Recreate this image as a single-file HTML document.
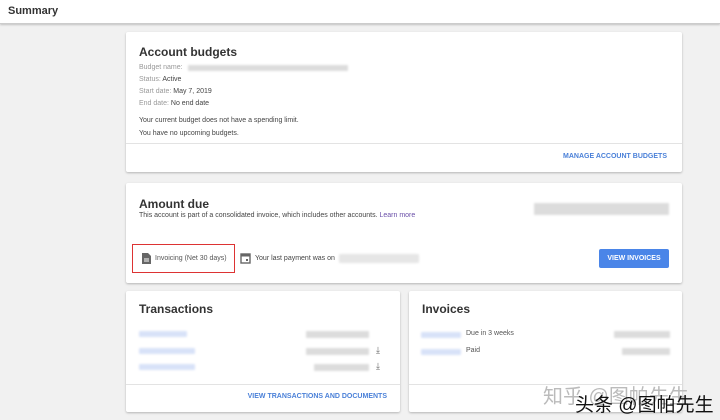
<!DOCTYPE html>
<html><head><style>
body{margin:0;width:720px;height:420px;background:#f1f1f1;font-family:"Liberation Sans",sans-serif;position:relative;overflow:hidden;color:#202124}
.hdr{position:absolute;left:0;top:0;width:720px;height:23px;background:#fff;border-bottom:1px solid #ccc;box-shadow:0 1px 2px rgba(0,0,0,.2)}
.hdr span{position:absolute;left:8px;top:5px;font-size:11px;font-weight:bold;color:#333}
.card{position:absolute;background:#fff;box-shadow:0 1px 2px rgba(0,0,0,.25);border-radius:2px}
.t{position:absolute;font-size:12px;font-weight:bold;color:#333;-webkit-text-stroke:0}
.s{position:absolute;font-size:7px;color:#444;white-space:nowrap}
.g{color:#999}
.line{position:absolute;left:0;right:0;height:1px;background:#e3e3e3}
.lk{position:absolute;font-size:7px;font-weight:bold;color:#4a80d8;white-space:nowrap}
.b{position:absolute;background:#dcdcdc;border-radius:1px;filter:blur(1px)}
.bl{position:absolute;background:#d8e2f8;border-radius:1px;filter:blur(1px)}
</style></head><body>
<div class="hdr"><span>Summary</span></div>

<div class="card" style="left:126px;top:32px;width:556px;height:140px">
<div class="t" style="left:13px;top:13px">Account budgets</div>
<div class="s g" style="left:13px;top:32px">Budget name:</div>
<div class="b" style="left:62px;top:33px;width:160px;height:6px"></div>
<div class="s" style="left:13px;top:44px"><span class="g">Status:</span> Active</div>
<div class="s" style="left:13px;top:56px"><span class="g">Start date:</span> May 7, 2019</div>
<div class="s" style="left:13px;top:68px"><span class="g">End date:</span> No end date</div>
<div class="s" style="left:13px;top:85px">Your current budget does not have a spending limit.</div>
<div class="s" style="left:13px;top:98px">You have no upcoming budgets.</div>
<div class="line" style="top:111px"></div>
<div class="lk" style="right:15px;top:121px">MANAGE ACCOUNT BUDGETS</div>
</div>

<div class="card" style="left:126px;top:183px;width:556px;height:100px">
<div class="t" style="left:13px;top:14px">Amount due</div>
<div class="s" style="left:13px;top:29px">This account is part of a consolidated invoice, which includes other accounts. <span style="color:#6a4fa8">Learn more</span></div>
<div class="b" style="left:408px;top:20px;width:135px;height:12px"></div>
<div style="position:absolute;left:6px;top:61px;width:103px;height:29px;border:1.5px solid #d33;box-sizing:border-box"></div>
<svg style="position:absolute;left:16px;top:70px" width="9" height="11" viewBox="0 0 9 11"><path d="M0 0h6l3 3v8H0z" fill="#666"/><path d="M2 6h5M2 8h5" stroke="#fff" stroke-width="1"/></svg>
<div class="s" style="left:29px;top:72px;color:#555">Invoicing (Net 30 days)</div>
<svg style="position:absolute;left:114px;top:69px" width="11" height="12" viewBox="0 0 11 12"><rect x="1" y="2" width="9" height="9" fill="none" stroke="#666" stroke-width="1.4"/><rect x="1" y="2" width="9" height="2.5" fill="#666"/><rect x="6" y="7" width="2" height="2" fill="#666"/></svg>
<div class="s" style="left:129px;top:72px">Your last payment was on</div>
<div class="b" style="left:213px;top:71px;width:80px;height:9px;background:#e6e6e6"></div>
<div style="position:absolute;left:473px;top:66px;width:70px;height:19px;background:#4a85e8;border-radius:2px;color:#fff;font-size:7px;font-weight:bold;text-align:center;line-height:19px">VIEW INVOICES</div>
</div>

<div class="card" style="left:126px;top:291px;width:274px;height:121px">
<div class="t" style="left:13px;top:11px">Transactions</div>
<div class="bl" style="left:13px;top:40px;width:48px;height:6px"></div>
<div class="bl" style="left:13px;top:57px;width:56px;height:6px"></div>
<div class="bl" style="left:13px;top:73px;width:56px;height:6px"></div>
<div class="b" style="left:180px;top:40px;width:63px;height:7px"></div>
<div class="b" style="left:180px;top:57px;width:63px;height:7px"></div>
<div class="b" style="left:188px;top:73px;width:55px;height:7px"></div>
<div class="s" style="left:250px;top:54px;color:#666;font-size:9px">⤓</div>
<div class="s" style="left:250px;top:70px;color:#666;font-size:9px">⤓</div>
<div class="line" style="top:93px"></div>
<div class="lk" style="right:13px;top:102px">VIEW TRANSACTIONS AND DOCUMENTS</div>
</div>

<div class="card" style="left:409px;top:291px;width:273px;height:121px">
<div class="t" style="left:13px;top:11px">Invoices</div>
<div class="bl" style="left:12px;top:41px;width:40px;height:6px"></div>
<div class="s" style="left:57px;top:39px;color:#555">Due in 3 weeks</div>
<div class="bl" style="left:12px;top:58px;width:40px;height:6px"></div>
<div class="s" style="left:57px;top:56px;color:#555">Paid</div>
<div class="b" style="left:205px;top:40px;width:56px;height:7px"></div>
<div class="b" style="left:213px;top:57px;width:48px;height:7px"></div>
<div class="line" style="top:93px"></div>
</div>
<div style="position:absolute;left:543px;top:380px;font-size:20px;color:#bbb;font-family:'Liberation Sans','Noto Sans CJK SC',sans-serif">知乎 @图帕先生</div>
<div style="position:absolute;left:575px;top:390px;font-size:19px;color:#111;font-family:'Liberation Sans','Noto Sans CJK SC',sans-serif">头条 @图帕先生</div>
</body></html>
